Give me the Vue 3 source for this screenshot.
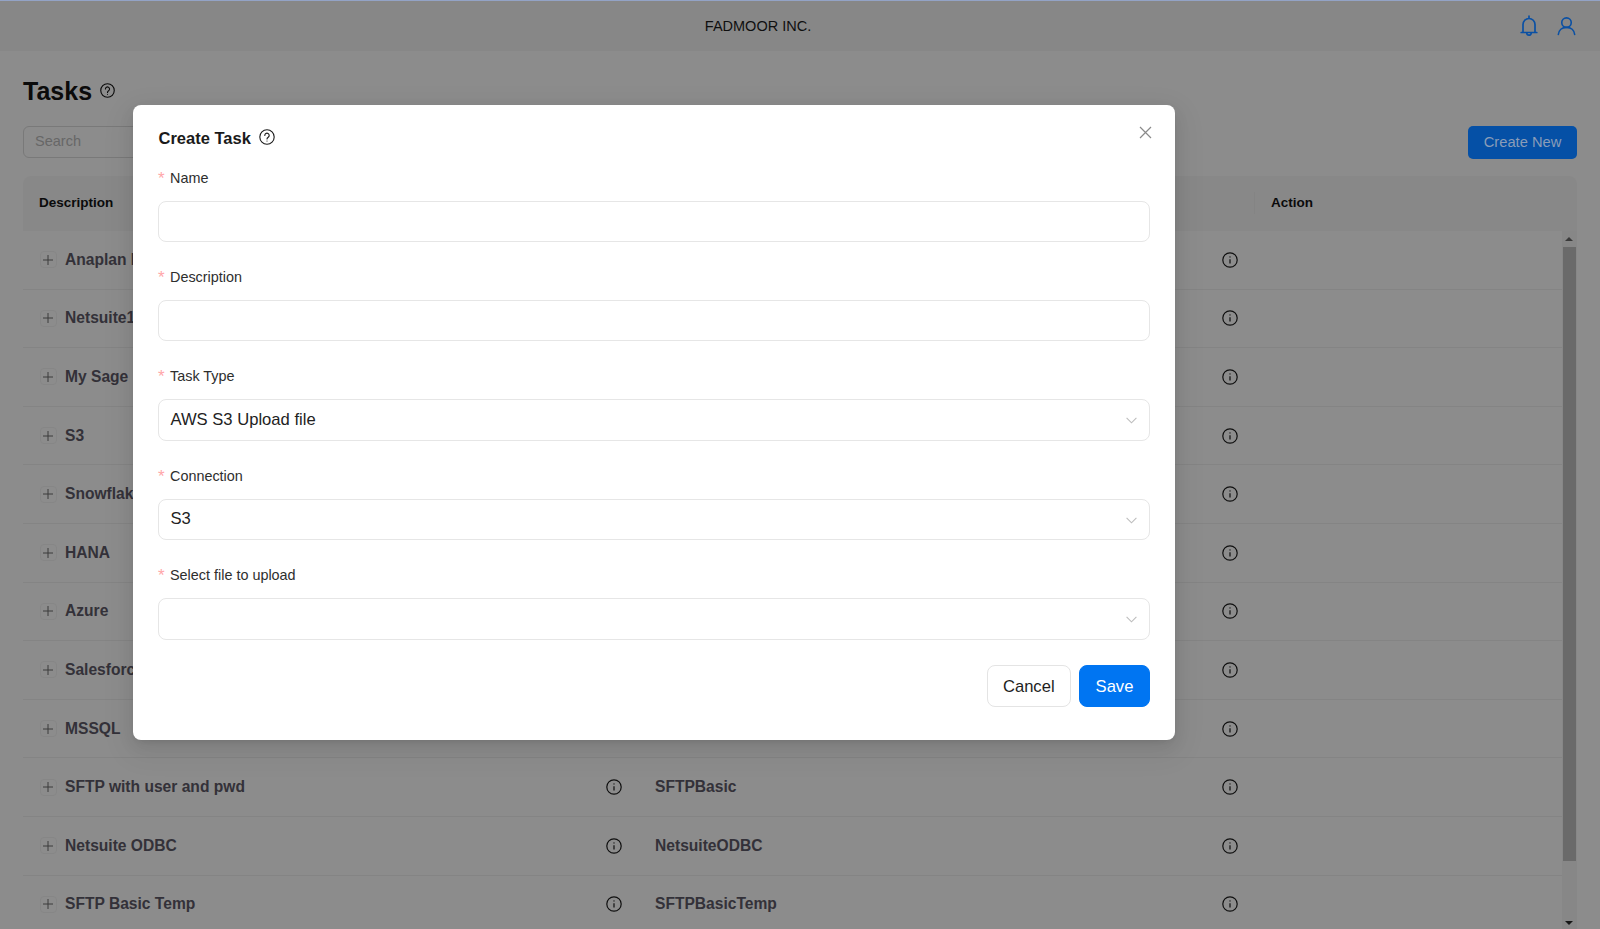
<script setup>
const rows = [
  ['Anaplan Import', 'Anaplan'],
  ['Netsuite1', 'Netsuite'],
  ['My Sage', 'Sage'],
  ['S3', 'S3'],
  ['Snowflake', 'Snowflake'],
  ['HANA', 'HANA'],
  ['Azure', 'Azure'],
  ['Salesforce', 'Salesforce'],
  ['MSSQL', 'MSSQL'],
  ['SFTP with user and pwd', 'SFTPBasic'],
  ['Netsuite ODBC', 'NetsuiteODBC'],
  ['SFTP Basic Temp', 'SFTPBasicTemp']
]
const fields = [
  { label: 'Name', type: 'input' },
  { label: 'Description', type: 'input' },
  { label: 'Task Type', type: 'select', value: 'AWS S3 Upload file' },
  { label: 'Connection', type: 'select', value: 'S3' },
  { label: 'Select file to upload', type: 'select', value: '' }
]
</script>

<template>
  <div class="page">
    <header class="topbar">
      <div class="brand">FADMOOR INC.</div>
      <div class="top-icons">
        <svg width="18" height="22" viewBox="0 0 18 22" fill="none" stroke="currentColor" stroke-width="1.700" stroke-linejoin="round" stroke-linecap="round">
          <path d="M9 1.200v2M3 16.500V9.500a6 6 0 0 1 12 0v7M1.200 17.500h15.600" />
          <path d="M6.800 18a2.200 2.200 0 0 0 4.400 0" />
        </svg>
        <svg width="19" height="20" viewBox="0 0 20 20" fill="none" stroke="currentColor" stroke-width="1.700" stroke-linecap="round">
          <circle cx="10" cy="6.400" r="5" />
          <path d="M1.400 19c.4-4.600 3.800-7.600 8.600-7.600s8.200 3 8.600 7.600" />
        </svg>
      </div>
    </header>

    <main class="content">
      <div class="title-row">
        <h1>Tasks</h1>
        <svg class="help" width="15" height="15" viewBox="0 0 16 16" fill="none" stroke="currentColor" stroke-width="1.200">
          <circle cx="8" cy="8" r="7.200" />
          <path d="M5.800 6.400a2.200 2.200 0 1 1 3.400 1.800c-.8.500-1.200.9-1.200 1.800" stroke-linecap="round" />
          <circle cx="8" cy="12" r=".6" fill="currentColor" stroke="none" />
        </svg>
      </div>

      <div class="toolbar">
        <div class="search">Search</div>
        <div class="create-btn">Create New</div>
      </div>

      <div class="table">
        <div class="thead">
          <div class="th first">Description</div>
          <div class="th"></div>
          <div class="th last">Action</div>
        </div>
        <div class="tbody">
          <div class="rows">
            <div v-for="row in rows" :key="row[0]" class="tr">
              <div class="td">
                <span class="expand">
                  <svg width="10" height="10" viewBox="0 0 10 10" stroke="currentColor" stroke-width="1"><path d="M5 0v10M0 5h10" /></svg>
                </span>
                <span class="cell-text">{{ row[0] }}</span>
                <svg class="info" width="16" height="16" viewBox="0 0 16 16" fill="none" stroke="currentColor" stroke-width="1.200">
                  <circle cx="8" cy="8" r="7.200" />
                  <path d="M8 7.200v4.300" />
                  <circle cx="8" cy="4.900" r=".7" fill="currentColor" stroke="none" />
                </svg>
              </div>
              <div class="td second">
                <span class="cell-text">{{ row[1] }}</span>
                <svg class="info" width="16" height="16" viewBox="0 0 16 16" fill="none" stroke="currentColor" stroke-width="1.200">
                  <circle cx="8" cy="8" r="7.200" />
                  <path d="M8 7.200v4.300" />
                  <circle cx="8" cy="4.900" r=".7" fill="currentColor" stroke="none" />
                </svg>
              </div>
              <div class="td"></div>
            </div>
          </div>
          <div class="scrollbar">
            <span class="arrow up"></span>
            <div class="thumb"></div>
            <span class="arrow down"></span>
          </div>
        </div>
      </div>
    </main>

    <div class="overlay"></div>

    <section class="modal">
      <svg class="close" width="13" height="13" viewBox="0 0 13 13" stroke="currentColor" stroke-width="1.200"><path d="M1 1l11 11M12 1L1 12" /></svg>
      <div class="modal-title">
        <span>Create Task</span>
        <svg width="16" height="16" viewBox="0 0 16 16" fill="none" stroke="currentColor" stroke-width="1.100">
          <circle cx="8" cy="8" r="7.200" />
          <path d="M5.800 6.400a2.200 2.200 0 1 1 3.400 1.800c-.8.500-1.200.9-1.200 1.800" stroke-linecap="round" />
          <circle cx="8" cy="12" r=".6" fill="currentColor" stroke="none" />
        </svg>
      </div>
      <div class="form">
        <div v-for="f in fields" :key="f.label" class="field" :class="f.type">
          <label><span class="req">*</span>{{ f.label }}</label>
          <div class="control">
            <span v-if="f.value">{{ f.value }}</span>
            <svg v-if="f.type === 'select'" class="chev" width="11" height="7" viewBox="0 0 11 7" fill="none" stroke="currentColor" stroke-width="1.100"><path d="M.6.800l4.900 5 4.900-5" /></svg>
          </div>
        </div>
      </div>
      <div class="actions">
        <div class="btn cancel">Cancel</div>
        <div class="btn save">Save</div>
      </div>
    </section>
  </div>
</template>

<style>
html, body { margin: 0; height: 100%; overflow: hidden; background: #fff; }
</style>

<style scoped>
.page {
  position: relative;
  width: 1600px;
  height: 929px;
  overflow: hidden;
  background: #fff;
  font-family: "Liberation Sans", Arial, sans-serif;
  color: #1a1a1a;
}
.topbar {
  display: flex;
  align-items: center;
  height: 50px;
  border-top: 1px solid #93a3c6;
  background: #f6f6f6;
}
.brand { flex: 1; text-align: center; font-size: 14.5px; color: #1c1c1c; }
.top-icons {
  position: relative;
  z-index: 2;
  width: 84px;
  display: flex;
  align-items: center;
  gap: 19px;
  padding-left: 4px;
  box-sizing: border-box;
  color: #0a50a4;
}
.content { padding: 0 23px; }
.title-row {
  display: flex;
  align-items: center;
  gap: 8px;
  height: 40px;
  margin-top: 20.500px;
}
h1 { margin: 0; font-size: 25px; font-weight: 700; color: #141414; }
.help { color: #141414; margin-top: -2px; }
.toolbar {
  display: flex;
  justify-content: space-between;
  margin-top: 14.500px;
  height: 33px;
}
.search {
  box-sizing: border-box;
  width: 300px;
  height: 32px;
  padding: 0 11px;
  border: 1px solid #dcdcdc;
  border-radius: 6px;
  font-size: 14.5px;
  line-height: 28px;
  color: #bcbcbc;
}
.create-btn {
  position: relative;
  z-index: 2;
  box-sizing: border-box;
  width: 109px;
  height: 33px;
  border-radius: 5px;
  background: #0550a6;
  color: #8a9db8;
  font-size: 14.7px;
  line-height: 33px;
  text-align: center;
}
.table { margin-top: 17px; }
.thead {
  display: grid;
  grid-template-columns: 616px 615px 323px;
  height: 55px;
  align-items: center;
  background: #f8f8f8;
  border-radius: 8px 8px 0 0;
  padding-bottom: 1px;
  box-sizing: border-box;
}
.th { height: 22px; line-height: 22px; font-size: 13.5px; font-weight: 700; color: #141414; }
.th.first { padding-left: 16px; }
.th.last {
  padding-left: 16px;
  border-left: 1px solid #f0f0f0;
}
.tbody { position: relative; height: 700px; overflow: hidden; }
.tr {
  display: grid;
  grid-template-columns: 616px 615px 323px;
  height: 58.6px;
  box-sizing: border-box;
  border-bottom: 1px solid #f0f0f0;
}
.td {
  display: flex;
  align-items: center;
  padding-left: 16.500px;
  padding-right: 17px;
  font-size: 15.6px;
  font-weight: 700;
  color: #5e5a68;
}
.td.second { padding-left: 16px; padding-right: 16px; }
.expand {
  display: inline-flex;
  align-items: center;
  justify-content: center;
  width: 15px;
  height: 15px;
  margin-right: 8.500px;
  border: 1px solid #f4f4f4;
  border-radius: 4px;
  color: #6d6d6d;
}
.cell-text { flex: 1; white-space: nowrap; }
.info { flex: none; color: #1c1c1c; }
.scrollbar {
  position: absolute;
  top: 0;
  right: 0;
  width: 15px;
  height: 698px;
  background: #f6f6f6;
}
.thumb {
  position: absolute;
  top: 16px;
  left: 1px;
  width: 13px;
  height: 614px;
  background: #c1c1c1;
}
.arrow { position: absolute; left: 3px; width: 0; height: 0; border-left: 4px solid transparent; border-right: 4px solid transparent; }
.arrow.up { top: 6px; border-bottom: 4px solid #6a6a6a; }
.arrow.down { bottom: 4px; border-top: 4px solid #2a2a2a; }

.overlay {
  position: absolute;
  inset: 1px 0 0 0;
  background: rgba(0, 0, 0, .45);
}
.modal {
  position: absolute;
  z-index: 3;
  left: 133px;
  top: 105px;
  box-sizing: border-box;
  width: 1042px;
  height: 635px;
  padding: 21px 25px 33px;
  background: #fff;
  border-radius: 8px;
  box-shadow: 0 6px 16px rgba(0, 0, 0, .08), 0 3px 6px -4px rgba(0, 0, 0, .12), 0 9px 28px 8px rgba(0, 0, 0, .05);
}
.close { position: absolute; top: 21px; right: 23px; color: #8a8a8a; }
.modal-title {
  display: flex;
  align-items: center;
  gap: 8px;
  height: 24px;
  padding-left: .5px;
  font-size: 16.5px;
  font-weight: 700;
  color: #1a1a1a;
}
.modal-title svg { margin-top: -3px; }
.form { margin-top: 17px; }
.field.input { margin-bottom: 24px; }
.field.select { margin-bottom: 24px; }
.field:last-child { margin-bottom: 0; }
label {
  display: block;
  height: 22px;
  line-height: 22px;
  margin-bottom: 12px;
  font-size: 14.4px;
  color: #2e2e2e;
}
.req {
  display: inline-block;
  width: 12px;
  color: #ffa6a9;
  font-size: 17px;
  line-height: 14px;
  vertical-align: -1px;
}
.control {
  position: relative;
  display: flex;
  align-items: center;
  box-sizing: border-box;
  height: 41px;
  padding: 0 11.500px;
  border: 1px solid #e6e6e6;
  border-radius: 8px;
  font-size: 16.6px;
  color: #222;
}
.select .control { height: 41.6px; }
.chev { position: absolute; right: 12px; top: 17px; color: #bdbdbd; }
.actions {
  display: flex;
  justify-content: flex-end;
  gap: 8px;
  margin-top: 25.500px;
}
.btn {
  box-sizing: border-box;
  height: 42px;
  line-height: 41px;
  border: 1px solid #e4e4e4;
  border-radius: 8px;
  font-size: 16.6px;
  color: #1e1e1e;
  text-align: center;
}
.btn.cancel { width: 84.500px; }
.btn.save { width: 71px; background: #0075f2; border-color: #0075f2; color: #fff; }
</style>
